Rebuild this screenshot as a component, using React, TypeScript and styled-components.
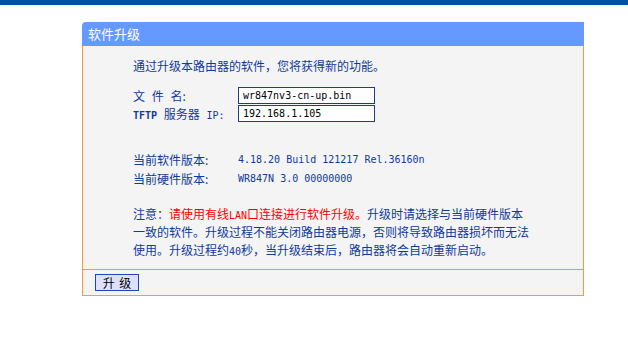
import styled, { createGlobalStyle } from 'styled-components';

const GlobalStyle = createGlobalStyle`
  html, body {
    margin: 0;
    padding: 0;
    background: #ffffff;
  }
  body {
    font-family: "Noto Sans CJK SC", "Liberation Sans", sans-serif;
    font-size: 12px;
  }
`;

const TopBar = styled.div`
  height: 5px;
  background: #0052a3;
`;

const Panel = styled.div`
  margin: 17px 0 0 82px;
  width: 502px;
`;

const PanelHeader = styled.div`
  height: 24px;
  line-height: 24px;
  background: #6699ff;
  color: #ffffff;
  font-size: 13px;
  padding-left: 6px;
  border-top-left-radius: 4px;
`;

const PanelBody = styled.div`
  background: #f4f4f4;
  border: 1px solid #ff9933;
  border-top: none;
`;

const Content = styled.div`
  padding: 11px 0 10px 50px;
  color: #103a9c;
`;

const Line = styled.div`
  line-height: 18px;
  height: 18px;
  white-space: nowrap;
`;

const FormRows = styled.div`
  margin-top: 12px;
  display: flex;
  flex-direction: column;
  gap: 1px;
`;

const FieldRow = styled.div`
  display: flex;
  align-items: center;
  height: 17px;
`;

const Label = styled.div<{ $spaced?: boolean }>`
  width: 105px;
  flex: none;
  white-space: pre;
  word-spacing: ${(p) => (p.$spaced ? '4px' : '0')};
`;

const Small = styled.span<{ $bold?: boolean }>`
  font-family: "DejaVu Sans Mono", monospace;
  font-size: 10px;
  font-weight: ${(p) => (p.$bold ? 'bold' : 'normal')};
`;

const TextInput = styled.div`
  box-sizing: border-box;
  width: 137px;
  height: 17px;
  line-height: 15px;
  border: 1px solid #1e3a8a;
  background: #ffffff;
  color: #000000;
  padding-left: 4px;
  font-family: "DejaVu Sans Mono", monospace;
  font-size: 10px;
`;

const InfoRows = styled.div`
  margin-top: 28px;
`;

const InfoRow = styled.div`
  display: flex;
  height: 19px;
  line-height: 19px;
`;

const InfoValue = styled.div`
  font-family: "DejaVu Sans Mono", monospace;
  font-size: 10px;
`;

const Notice = styled.div`
  margin-top: 17px;
`;

const Red = styled.span`
  color: #ff0000;
`;

const Footer = styled.div`
  border-top: 1px solid #ff9933;
  height: 25px;
  padding-left: 12px;
  display: flex;
  align-items: center;
`;

const Button = styled.button`
  box-sizing: border-box;
  width: 44px;
  height: 17px;
  padding: 0;
  background: #dde0ff;
  border: 1px solid #2244bb;
  color: #000000;
  font-family: "Noto Sans CJK SC", sans-serif;
  font-size: 12px;
  line-height: 14px;
  word-spacing: 2px;
`;

export default function App() {
  return (
    <>
      <GlobalStyle />
      <TopBar />
      <Panel>
        <PanelHeader>软件升级</PanelHeader>
        <PanelBody>
          <Content>
            <Line>通过升级本路由器的软件，您将获得新的功能。</Line>
            <FormRows>
              <FieldRow>
                <Label $spaced>文 件 名:</Label>
                <TextInput>wr847nv3-cn-up.bin</TextInput>
              </FieldRow>
              <FieldRow>
                <Label $spaced>
                  <Small $bold>TFTP</Small> 服务器 <Small>IP:</Small>
                </Label>
                <TextInput>192.168.1.105</TextInput>
              </FieldRow>
            </FormRows>
            <InfoRows>
              <InfoRow>
                <Label>当前软件版本:</Label>
                <InfoValue>4.18.20 Build 121217 Rel.36160n</InfoValue>
              </InfoRow>
              <InfoRow>
                <Label>当前硬件版本:</Label>
                <InfoValue>WR847N 3.0 00000000</InfoValue>
              </InfoRow>
            </InfoRows>
            <Notice>
              <Line>
                注意：<Red>请使用有线<Small>LAN</Small>口连接进行软件升级。</Red>升级时请选择与当前硬件版本
              </Line>
              <Line>一致的软件。升级过程不能关闭路由器电源，否则将导致路由器损坏而无法</Line>
              <Line>
                使用。升级过程约<Small>40</Small>秒，当升级结束后，路由器将会自动重新启动。
              </Line>
            </Notice>
          </Content>
          <Footer>
            <Button>升 级</Button>
          </Footer>
        </PanelBody>
      </Panel>
    </>
  );
}
